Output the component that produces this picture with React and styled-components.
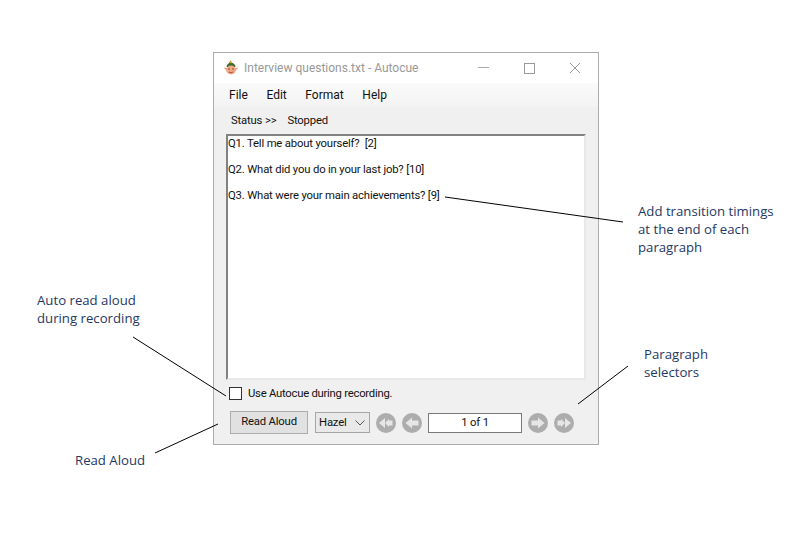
import React from 'react';
import styled, { createGlobalStyle } from 'styled-components';

const GlobalStyle = createGlobalStyle`
  html, body { margin: 0; padding: 0; background: #fff; }
  body { font-family: Roboto, "Open Sans", sans-serif; }
`;

const Stage = styled.div`
  position: relative;
  width: 786px;
  height: 537px;
  overflow: hidden;
  padding: 52px 0 0 213px;
  box-sizing: border-box;
`;

const Leaders = styled.svg`
  position: absolute;
  left: 0;
  top: 0;
  pointer-events: none;
`;

const Note = styled.div`
  position: absolute;
  left: ${p => p.$x}px;
  top: ${p => p.$y}px;
  font-family: "Open Sans", sans-serif;
  font-size: 13.2px;
  line-height: 18px;
  color: #1f3864;
  white-space: nowrap;
`;

const Window = styled.div`
  width: 386px;
  height: 393px;
  box-sizing: border-box;
  border: 1px solid #ababab;
  background: #f0f0f0;
  display: flex;
  flex-direction: column;
`;

const TitleBar = styled.div`
  height: 30px;
  background: #fff;
  display: flex;
  align-items: center;
  padding-left: 9px;
`;

const TitleText = styled.span`
  margin-left: 5px;
  font-size: 12px;
  color: #999;
  white-space: nowrap;
  flex: 1;
`;

const WinButton = styled.div`
  width: 46px;
  height: 30px;
  display: flex;
  align-items: center;
  justify-content: center;
`;

const MenuBar = styled.div`
  height: 24px;
  box-sizing: border-box;
  background: linear-gradient(#fafafa, #f3f3f3);
  display: flex;
  align-items: center;
  padding: 0 0 0 15px;
  gap: 18.6px;
`;

const MenuItem = styled.span`
  font-size: 12px;
  color: #111;
`;

const StatusRow = styled.div`
  height: 27px;
  box-sizing: border-box;
  display: flex;
  align-items: center;
  padding: 0 0 1px 17px;
  gap: 11px;
  font-size: 11.3px;
  letter-spacing: -0.17px;
  color: #111;
`;

const Editor = styled.div`
  margin-left: 12px;
  width: 360px;
  height: 246px;
  box-sizing: border-box;
  background: #fff;
  border: 2px solid;
  border-color: #828282 #e8e8e8 #e8e8e8 #828282;
  padding: 1px 0 0 0;
  font-size: 11.3px;
  letter-spacing: -0.17px;
  color: #111;
`;

const Paragraph = styled.div`
  height: 26px;
  line-height: 14px;
  white-space: pre;
`;

const CheckRow = styled.label`
  height: 26px;
  display: flex;
  align-items: center;
  padding-left: 15px;
  gap: 6px;
  font-size: 11.3px;
  letter-spacing: -0.25px;
  color: #111;
`;

const CheckBox = styled.span`
  width: 11px;
  height: 11px;
  border: 1px solid #333;
  background: #fff;
`;

const Controls = styled.div`
  display: flex;
  align-items: center;
  padding: 5px 0 0 16px;
`;

const ReadButton = styled.button`
  width: 78px;
  height: 23px;
  box-sizing: border-box;
  padding: 0 0 2px;
  border: 1px solid #adadad;
  background: #e1e1e1;
  font-family: Roboto, sans-serif;
  font-size: 11.3px;
  letter-spacing: -0.17px;
  color: #111;
`;

const VoiceSelect = styled.div`
  margin-left: 7px;
  width: 55px;
  height: 21px;
  box-sizing: border-box;
  border: 1px solid #a6a6a6;
  background: #e9e9e9;
  display: flex;
  align-items: center;
  justify-content: space-between;
  padding: 0 4px 0 3px;
  font-size: 11.3px;
  letter-spacing: -0.17px;
  color: #111;
`;

const NavRow = styled.div`
  margin-left: 6px;
  display: flex;
  align-items: center;
  gap: 6px;
`;

const NavButton = styled.svg`
  display: block;
  width: 20px;
  height: 20px;
`;

const PageBox = styled.div`
  width: 94px;
  height: 20px;
  box-sizing: border-box;
  border: 1px solid #7a7a7a;
  background: #fff;
  text-align: center;
  line-height: 18px;
  font-size: 11.3px;
  letter-spacing: -0.17px;
  color: #111;
`;

const Elf = () => (
  <svg width="16" height="16" viewBox="0 0 16 16">
    <path d="M7.5 0.5 L9 3 L6 3 Z" fill="#c8402a" />
    <path d="M3.5 7 Q4 3 8 2.5 Q12 3 12.5 7 Z" fill="#3f6a2c" />
    <rect x="7" y="1.5" width="2" height="1.6" fill="#e6b422" />
    <path d="M0.5 7.5 L4 8 L4 11 Z M15.5 7.5 L12 8 L12 11 Z" fill="#e89a78" />
    <ellipse cx="8" cy="10" rx="4.8" ry="4.4" fill="#f0a885" />
    <circle cx="6" cy="9" r="0.7" fill="#5a3020" />
    <circle cx="10" cy="9" r="0.7" fill="#5a3020" />
    <path d="M5.8 12 Q8 13.6 10.2 12" stroke="#b5523a" fill="none" />
  </svg>
);

const Minimize = () => (
  <svg width="12" height="12" viewBox="0 0 12 12"><path d="M1 5.5H12" stroke="#aaa" /></svg>
);
const Maximize = () => (
  <svg width="11" height="11" viewBox="0 0 11 11"><rect x="0.5" y="0.5" width="10" height="10" fill="none" stroke="#999" /></svg>
);
const Close = () => (
  <svg width="12" height="12" viewBox="0 0 12 12"><path d="M1 1L11 11M11 1L1 11" stroke="#999" /></svg>
);

// drawn facing left, mirrored for the forward buttons
const Arrow = ({ double, flip }) => (
  <NavButton viewBox="0 0 20 20">
    <circle cx="10" cy="10" r="10" fill="#adadad" />
    <g fill="#e6e6e6" transform={flip ? 'matrix(-1 0 0 1 20 0)' : undefined}>
      {double ? (
        <>
          <path d="M3 10 L9 5 V15 Z" />
          <path d="M9 10 L13 6 V14 Z" />
          <rect x="13" y="7.5" width="3.5" height="5" />
        </>
      ) : (
        <>
          <path d="M3.5 10 L10 4.5 V15.5 Z" />
          <rect x="10" y="7.5" width="6.5" height="5" />
        </>
      )}
    </g>
  </NavButton>
);

export default function App() {
  return (
    <Stage>
      <GlobalStyle />
      <Window>
        <TitleBar>
          <Elf />
          <TitleText>Interview questions.txt - Autocue</TitleText>
          <WinButton><Minimize /></WinButton>
          <WinButton><Maximize /></WinButton>
          <WinButton><Close /></WinButton>
        </TitleBar>
        <MenuBar>
          <MenuItem>File</MenuItem>
          <MenuItem>Edit</MenuItem>
          <MenuItem>Format</MenuItem>
          <MenuItem>Help</MenuItem>
        </MenuBar>
        <StatusRow>
          <span>Status &gt;&gt;</span>
          <span>Stopped</span>
        </StatusRow>
        <Editor>
          <Paragraph>Q1. Tell me about yourself?  [2]</Paragraph>
          <Paragraph>Q2. What did you do in your last job? [10]</Paragraph>
          <Paragraph>Q3. What were your main achievements? [9]</Paragraph>
        </Editor>
        <CheckRow>
          <CheckBox />
          Use Autocue during recording.
        </CheckRow>
        <Controls>
          <ReadButton>Read Aloud</ReadButton>
          <VoiceSelect>
            Hazel
            <svg width="10" height="6" viewBox="0 0 10 6"><path d="M0.5 0.5L5 5L9.5 0.5" fill="none" stroke="#555" /></svg>
          </VoiceSelect>
          <NavRow>
            <Arrow double />
            <Arrow />
            <PageBox>1 of 1</PageBox>
            <Arrow flip />
            <Arrow double flip />
          </NavRow>
        </Controls>
      </Window>
      <Leaders width="786" height="537">
        <g stroke="#000" strokeWidth="1" fill="none">
          <path d="M445 197L623 222" />
          <path d="M133 337L226 396" />
          <path d="M155 453L218 424" />
          <path d="M578 404L628 366" />
        </g>
      </Leaders>
      <Note $x={638} $y={202}>Add transition timings<br />at the end of each<br />paragraph</Note>
      <Note $x={37} $y={291}>Auto read aloud<br />during recording</Note>
      <Note $x={644} $y={345}>Paragraph<br />selectors</Note>
      <Note $x={75} $y={451}>Read Aloud</Note>
    </Stage>
  );
}
